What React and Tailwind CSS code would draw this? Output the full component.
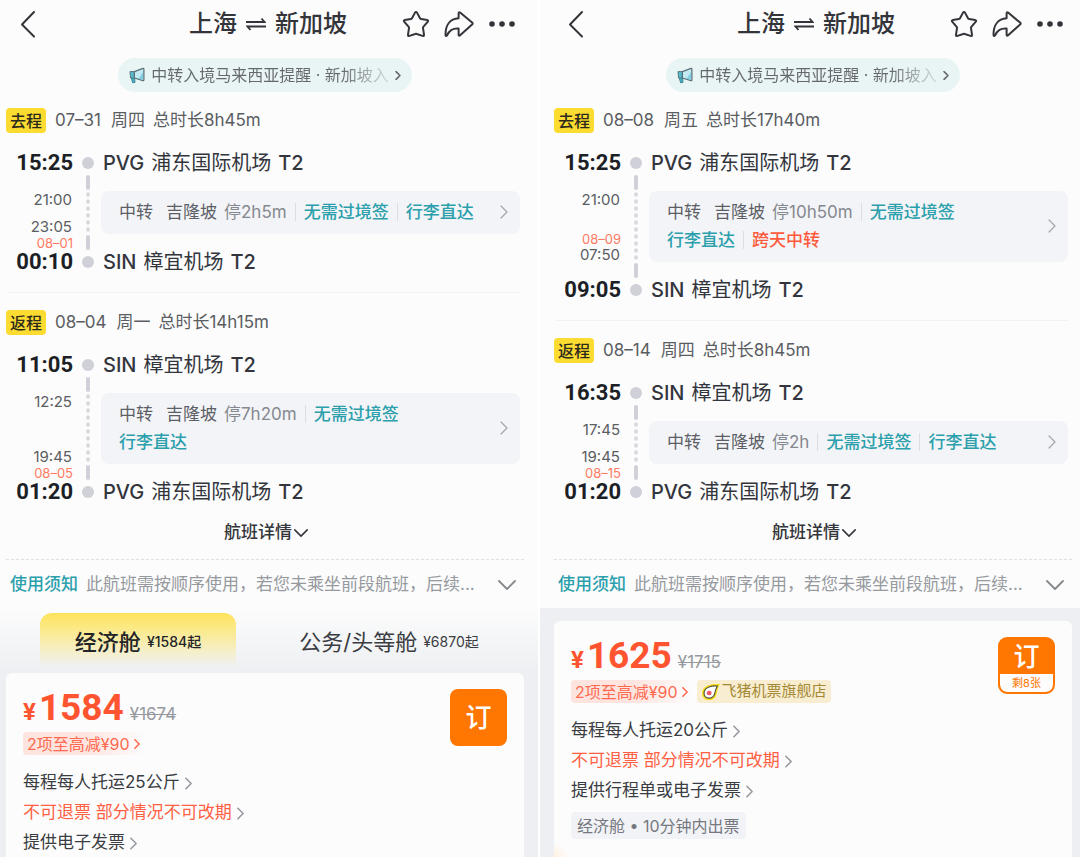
import React from "react";

const TRIPS = [
  {
    legs: [
      {
        label: "去程",
        date: "07–31",
        weekday: "周四",
        total: "总时长8h45m",
        depart: { time: "15:25", code: "PVG", name: "浦东国际机场", terminal: "T2" },
        arrive: { time: "00:10", code: "SIN", name: "樟宜机场", terminal: "T2", nextDay: "08–01" },
        transfer: {
          from: "21:00",
          to: "23:05",
          city: "吉隆坡",
          stay: "停2h5m",
          tags: ["无需过境签", "行李直达"],
          moreTags: [],
        },
      },
      {
        label: "返程",
        date: "08–04",
        weekday: "周一",
        total: "总时长14h15m",
        depart: { time: "11:05", code: "SIN", name: "樟宜机场", terminal: "T2" },
        arrive: { time: "01:20", code: "PVG", name: "浦东国际机场", terminal: "T2", nextDay: "08–05" },
        transfer: {
          from: "12:25",
          to: "19:45",
          city: "吉隆坡",
          stay: "停7h20m",
          tags: ["无需过境签"],
          moreTags: ["行李直达"],
        },
      },
    ],
    cabins: [
      { name: "经济舱", price: "¥1584起", active: true },
      { name: "公务/头等舱", price: "¥6870起", active: false },
    ],
    fare: {
      price: "1584",
      original: "¥1674",
      discount: "2项至高减¥90",
      baggage: "每程每人托运25公斤",
      refund: "不可退票 部分情况不可改期",
      invoice: "提供电子发票",
    },
  },
  {
    legs: [
      {
        label: "去程",
        date: "08–08",
        weekday: "周五",
        total: "总时长17h40m",
        depart: { time: "15:25", code: "PVG", name: "浦东国际机场", terminal: "T2" },
        arrive: { time: "09:05", code: "SIN", name: "樟宜机场", terminal: "T2" },
        transfer: {
          from: "21:00",
          to: "07:50",
          toDay: "08–09",
          city: "吉隆坡",
          stay: "停10h50m",
          tags: ["无需过境签"],
          moreTags: ["行李直达", "跨天中转"],
        },
      },
      {
        label: "返程",
        date: "08–14",
        weekday: "周四",
        total: "总时长8h45m",
        depart: { time: "16:35", code: "SIN", name: "樟宜机场", terminal: "T2" },
        arrive: { time: "01:20", code: "PVG", name: "浦东国际机场", terminal: "T2", nextDay: "08–15" },
        transfer: {
          from: "17:45",
          to: "19:45",
          city: "吉隆坡",
          stay: "停2h",
          tags: ["无需过境签", "行李直达"],
          moreTags: [],
        },
      },
    ],
    cabins: [],
    fare: {
      price: "1625",
      original: "¥1715",
      discount: "2项至高减¥90",
      store: "飞猪机票旗舰店",
      baggage: "每程每人托运20公斤",
      refund: "不可退票 部分情况不可改期",
      invoice: "提供行程单或电子发票",
      ticketing: "经济舱 • 10分钟内出票",
      left: "剩8张",
    },
  },
];

// Chevron pointing right; colour and size come from the class
function ChevronRight({ className, width = 1.5 }) {
  return (
    <svg viewBox="0 0 8 14" className={className} fill="none" stroke="currentColor" strokeWidth={width} strokeLinecap="round" strokeLinejoin="round" aria-hidden="true">
      <path d="M1 1l6 6-6 6" />
    </svg>
  );
}

function ChevronDown({ className, width = 1.5 }) {
  return (
    <svg viewBox="0 0 18 10" className={className} fill="none" stroke="currentColor" strokeWidth={width} strokeLinecap="round" strokeLinejoin="round" aria-hidden="true">
      <path d="M1 1l8 8 8-8" />
    </svg>
  );
}

function Megaphone() {
  return (
    <svg viewBox="0 0 16 17" className="h-[17px] w-4 shrink-0" fill="none" strokeLinejoin="round" aria-hidden="true">
      <path d="M2 10h3.600l.4 5.400-2.400.4z" fill="#3fb4c8" stroke="#3b7f8e" strokeWidth=".9" />
      <path d="M1 4.600h4.400V11H1.600z" fill="#56bccd" stroke="#557880" strokeWidth="1" />
      <path d="M5.400 4.600L14 1.400q.9-.2.9.8v10.600q0 1-.9.8L5.400 11z" fill="#c3eaf2" stroke="#5a6f76" strokeWidth="1.200" />
      <path d="M9.500 12L14 5v7.500z" fill="#7fd0e2" />
    </svg>
  );
}

function PigLogo() {
  return (
    <svg viewBox="0 0 20 18" className="h-[18px] w-5 shrink-0" aria-hidden="true">
      <path d="M19 1C15 1 11 .8 8 1.900 4 3.300 1 6 1 10.200 1 14.400 4 17.200 8 17.200c4.600 0 7-2.900 7.700-6.500C16.300 7.300 17.200 4 19 1z" fill="#fbe11c" />
      <path d="M16.400 3c-2.900-.1-6.200 0-8.500 1C5 5.200 3 7.200 3 10.200c0 3 2.200 5 5.200 5 3.300 0 5-2.100 5.600-5C14.300 7.600 15.200 5.200 16.400 3z" fill="#fff" stroke="#55563f" strokeWidth="1.200" />
      <ellipse cx="8.200" cy="10" rx="2.500" ry="2.200" fill="#ee5a6a" />
    </svg>
  );
}

function Header() {
  return (
    <header className="flex h-[47px] items-center px-4 text-[#33353a]">
      <div className="flex flex-1 pl-1">
        <button type="button" aria-label="返回">
          <svg viewBox="0 0 16 28" className="h-7 w-4" fill="none" stroke="currentColor" strokeWidth="2" strokeLinecap="round" strokeLinejoin="round">
            <path d="M14 2L2 14.500l12 12" />
          </svg>
        </button>
      </div>
      <h1 className="flex items-center gap-[9px] text-2xl font-medium">
        <span>上海</span>
        <svg viewBox="0 0 20 14" className="h-[14px] w-5" fill="none" stroke="currentColor" strokeWidth="1.800" aria-hidden="true">
          <path d="M0 5h18.500L15.500 1.500M20 9.500H1.500l3 3.500" />
        </svg>
        <span>新加坡</span>
      </h1>
      <div className="flex flex-1 items-center justify-end gap-[14px]">
        <button type="button" aria-label="收藏">
          <svg viewBox="0 0 28 28" className="size-7" fill="none" stroke="currentColor" strokeWidth="2" strokeLinejoin="round">
            <path d="M13 2.600q1-1.400 2 0l3 5.600q.3.600 1 .7l6.300 1.200q1.500.4.500 1.600l-4.500 5.200q-.4.500-.3 1.200l1 6.600q.1 1.700-1.500 1.200L14.800 24q-.8-.3-1.600 0L7.500 25.900q-1.600.5-1.500-1.200l1-6.600q.1-.7-.3-1.200L2.200 11.700q-1-1.200.5-1.600L9 8.900q.7-.1 1-.7z" />
          </svg>
        </button>
        <button type="button" aria-label="分享">
          <svg viewBox="0 0 30 28" className="h-7 w-[30px]" fill="none" stroke="currentColor" strokeWidth="2" strokeLinejoin="round">
            <path d="M14.600 8.200V3.400q0-1.800 1.500-.8l12 10q1.200 1 0 2l-12 10.600q-1.500 1.200-1.500-.8v-5.800C8.500 18.200 5.500 20 3.200 25.200q-1.500 2-1.700-.6C1.500 15 6 8.800 14.600 8.200z" />
          </svg>
        </button>
        <button type="button" aria-label="更多">
          <svg viewBox="0 0 28 8" className="h-2 w-7" fill="currentColor">
            <circle cx="4" cy="4" r="2.800" />
            <circle cx="14" cy="4" r="2.800" />
            <circle cx="24" cy="4" r="2.800" />
          </svg>
        </button>
      </div>
    </header>
  );
}

function NoticePill() {
  return (
    <div className="mt-[11px] flex justify-center pr-[2px]">
      <a href="#notice" className="flex h-[34px] items-center rounded-full bg-[#e9f4f5] px-[11px] text-[#65696d]">
        <Megaphone />
        <span className="ml-[6px] bg-linear-to-r from-[#65696d] from-80% to-[#65696d]/15 bg-clip-text text-base whitespace-nowrap text-transparent">
          中转入境马来西亚提醒 · 新加坡入
        </span>
        <ChevronRight className="ml-[6px] h-[9px] w-[6px] shrink-0" width={2.5} />
      </a>
    </div>
  );
}

function Airport({ stop }) {
  return (
    <div className="flex h-7 items-center gap-[7px] pl-[2px] text-xl text-[#33353c]">
      <span className="font-medium">{stop.code}</span>
      <span>{stop.name}</span>
      <span className="font-medium">{stop.terminal}</span>
    </div>
  );
}

function Rail() {
  return (
    <div className="flex w-3 flex-col items-center py-2">
      <i className="size-3 rounded-full bg-[#d0d1d8]" />
      <i className="mt-[6px] h-[15px] w-1 rounded-full bg-[#d0d1d8]" />
      <i className="my-px w-1 flex-1 bg-[radial-gradient(circle,#d5d6dc_1px,transparent_3px)] bg-[length:4px_7px] bg-round" />
      <i className="mb-[6px] h-[15px] w-1 rounded-full bg-[#d0d1d8]" />
      <i className="size-3 rounded-full bg-[#d0d1d8]" />
    </div>
  );
}

function TransferTag({ children }) {
  const warn = children === "跨天中转";
  return <span className={warn ? "font-medium text-[#ff5a3c]" : "font-medium text-[#2b9fac]"}>{children}</span>;
}

function Separator() {
  return <i className="mx-2 h-[18px] w-px bg-[#dcdee2]" />;
}

function TransferCard({ transfer }) {
  return (
    <a href="#transfer" className="my-[14px] flex items-center rounded-lg bg-[#f3f4f7] pt-[7px] pr-3 pb-2 pl-[18px] text-[17px] leading-7">
      <div className="flex-1">
        <div className="flex items-center whitespace-nowrap">
          <span className="mr-[13px] text-[#5c5f66]">中转</span>
          <span className="mr-[7px] text-[#5c5f66]">{transfer.city}</span>
          <span className="text-[#85888f]">{transfer.stay}</span>
          {transfer.tags.map(tag => (
            <React.Fragment key={tag}>
              <Separator />
              <TransferTag>{tag}</TransferTag>
            </React.Fragment>
          ))}
        </div>
        {transfer.moreTags.length > 0 && (
          <div className="flex items-center">
            {transfer.moreTags.map((tag, i) => (
              <React.Fragment key={tag}>
                {i > 0 && <Separator />}
                <TransferTag>{tag}</TransferTag>
              </React.Fragment>
            ))}
          </div>
        )}
      </div>
      <ChevronRight className="h-[14px] w-2 text-[#a2a5ab]" width={1.2} />
    </a>
  );
}

function Leg({ leg }) {
  const { depart, arrive, transfer } = leg;
  return (
    <section>
      <div className="flex h-[25px] items-center pl-[6px] text-[17px] text-[#5a5d62]">
        <span className="mr-[9px] flex h-[25px] w-10 items-center justify-center rounded bg-[#fddc31] text-base font-medium text-[#2c2a1c]">{leg.label}</span>
        <span className="mr-[10px]">{leg.date}</span>
        <span className="mr-2">{leg.weekday}</span>
        <span>{leg.total}</span>
      </div>

      <div className="mt-4 flex pr-3">
        {/* Times */}
        <div className="mr-[9px] flex w-[73px] flex-col text-right text-[15px] leading-[18px] text-[#5a5d62]">
          <time className="h-7 font-[Roboto] text-[22px] leading-7 font-bold text-[#1d1f26]">{depart.time}</time>
          <time className="mt-[14px] pr-px">{transfer.from}</time>
          <div className="flex-1" />
          {transfer.toDay && <span className="text-[13px] leading-[14px] text-[#ff7a62]">{transfer.toDay}</span>}
          <time className="pr-px">{transfer.to}</time>
          <span className="h-[18px] text-[13px] leading-[14px] text-[#ff7a62]">{arrive.nextDay}</span>
          <time className="mb-[6px] font-[Roboto] text-[22px] leading-4 font-bold text-[#1d1f26]">{arrive.time}</time>
        </div>
        <Rail />
        {/* Airports and transfer */}
        <div className="ml-[7px] flex-1">
          <Airport stop={depart} />
          <TransferCard transfer={transfer} />
          <Airport stop={arrive} />
        </div>
      </div>
    </section>
  );
}

function UsageNotice() {
  return (
    <button type="button" className="flex h-12 w-full items-center pt-[2px] pr-4 pl-[10px] text-[17px]">
      <span className="mr-2 font-medium text-[#2b9fac]">使用须知</span>
      <span className="text-[#96999e]">此航班需按顺序使用，若您未乘坐前段航班，后续...</span>
      <ChevronDown className="ml-auto h-[10px] w-[18px] shrink-0 text-[#85888d]" width={1.8} />
    </button>
  );
}

function CabinTabs({ cabins }) {
  return (
    <div role="tablist" className="grid grid-cols-[196px_1fr] gap-x-[30px] bg-linear-to-b from-[#fcfcfc] to-[#edeff2] pt-[5px] pr-[26px] pl-10">
      {cabins.map(cabin => (
        <button
          key={cabin.name}
          type="button"
          role="tab"
          aria-selected={cabin.active}
          className={
            cabin.active
              ? "flex h-[60px] items-center justify-center gap-[6px] rounded-t-xl bg-linear-to-b from-[#fde35a] to-[#fde35a]/0 to-90% pb-[2px] font-medium text-[#222428]"
              : "flex h-[60px] items-center justify-center gap-[6px] pb-[2px] text-[#3a3c42]"
          }
        >
          <span className="text-[22px]">{cabin.name}</span>
          <span className="text-sm">{cabin.price}</span>
        </button>
      ))}
    </div>
  );
}

function FareRow({ children, warn }) {
  return (
    <a href="#rules" className={warn ? "flex h-[30px] items-center gap-[5px] text-[#ff5f43]" : "flex h-[30px] items-center gap-[5px] text-[#3a3d42]"}>
      {children}
      <ChevronRight className="h-[13px] w-[7px] text-[#96999e]" width={1.8} />
    </a>
  );
}

function FareCard({ fare, className }) {
  return (
    <div className={className}>
      <div>
        <div className="flex h-[46px] items-baseline pt-[17px]">
          <span className="font-[Roboto] text-2xl leading-9 font-bold text-[#ff5430]">¥</span>
          <span className="ml-[3px] font-[Roboto] text-[37px] leading-9 font-bold text-[#ff5430]">{fare.price}</span>
          <s className="ml-[6px] text-[17px] text-[#96999e]">{fare.original}</s>
        </div>
        <div className="mt-[13px] flex h-[23px] items-center gap-[5px] text-base">
          <a href="#discount" className="flex h-full items-center gap-1 rounded-sm bg-linear-to-r from-[#fee4df] from-50% to-[#fee4df]/0 pr-1 pl-1 text-[#ff6a50]">
            {fare.discount}
            <ChevronRight className="h-[10px] w-[6px]" width={2.2} />
          </a>
          {fare.store && (
            <span className="flex h-full items-center gap-px rounded-sm bg-[#f8edd0] px-1 text-[15px] text-[#a58a35]">
              <PigLogo />
              {fare.store}
            </span>
          )}
        </div>
        <div className="mt-[13px] text-[17px]">
          <FareRow>{fare.baggage}</FareRow>
          <FareRow warn>{fare.refund}</FareRow>
          <FareRow>{fare.invoice}</FareRow>
        </div>
        {fare.ticketing && (
          <span className="mt-[6px] inline-flex h-[27px] items-center rounded-sm bg-[#f2f3f6] px-[6px] text-base text-[#75787f]">{fare.ticketing}</span>
        )}
      </div>
      {fare.left ? (
        <button type="button" className="mt-4 flex h-[57px] w-[57px] flex-col overflow-hidden rounded-[9px] border-2 border-[#ff7600] bg-[#ff7600] text-white">
          <span className="flex h-[35px] w-full items-center justify-center text-[26px] font-medium">订</span>
          <span className="flex w-full flex-1 items-center justify-center rounded-b-[7px] bg-[#fcfcfc] text-[11px] text-[#ff7600]">{fare.left}</span>
        </button>
      ) : (
        <button type="button" className="mt-4 h-[57px] w-[57px] rounded-lg bg-[#ff7600] text-[26px] font-medium text-white">订</button>
      )}
    </div>
  );
}

function TripPanel({ trip, className }) {
  const hasCabins = trip.cabins.length > 0;
  return (
    <article className={className}>
      <Header />
      <NoticePill />
      <div className="mt-4">
        <Leg leg={trip.legs[0]} />
        <hr className="mt-4 mr-3 mb-[17px] ml-2 border-[#f3f3f5]" />
        <Leg leg={trip.legs[1]} />
      </div>
      <button type="button" className="mt-[14px] flex h-[26px] items-center gap-[2px] self-center text-[17px] font-medium text-[#33353a]">
        航班详情
        <ChevronDown className="h-2 w-[14px]" width={2} />
      </button>
      <hr className="mt-[13px] mr-2 ml-[6px] border-dashed border-[#dfe0e3]" />
      <UsageNotice />
      {hasCabins ? (
        <div className="-mr-[6px] flex flex-1 flex-col bg-[#edeff2]">
          <CabinTabs cabins={trip.cabins} />
          <FareCard fare={trip.fare} className="mr-[14px] ml-[6px] flex flex-1 items-start justify-between rounded-t-md bg-[#fcfcfc] px-[17px]" />
        </div>
      ) : (
        <div className="-ml-2 flex flex-1 flex-col bg-[#edeff2] pt-[13px] pl-2">
          <FareCard fare={trip.fare} className="mr-2 ml-[6px] flex flex-1 items-start justify-between rounded-t-md bg-[#fcfcfc] bg-[radial-gradient(circle_at_bottom_left,#fff0e0,#fcfcfc_16px)] px-[17px]" />
        </div>
      )}
    </article>
  );
}

export default function App() {
  return (
    <main className="grid min-h-screen grid-cols-2 bg-[#fcfcfc] font-[Inter,'Noto_Sans_CJK_SC',sans-serif]">
      <TripPanel trip={TRIPS[0]} className="flex flex-col border-r-2 border-white pr-[6px]" />
      <TripPanel trip={TRIPS[1]} className="flex flex-col pl-2" />
    </main>
  );
}
